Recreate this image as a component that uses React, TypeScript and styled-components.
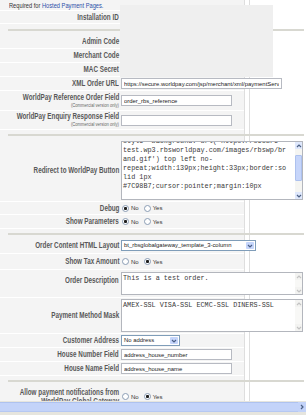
import React from 'react';
import styled, { createGlobalStyle } from 'styled-components';

const SANS = `"Liberation Sans", Arial, "Noto Sans", sans-serif`;
const MONO = `"Liberation Mono", "DejaVu Sans Mono", monospace`;

const GlobalStyle = createGlobalStyle`
  html, body {
    margin: 0;
    padding: 0;
    width: 306px;
    height: 415px;
    overflow: hidden;
    background: #fff;
  }
  body {
    font-family: ${SANS};
  }
`;

const Page = styled.div`
  position: relative;
  width: 306px;
  height: 415px;
  overflow: hidden;
  background: linear-gradient(
    to right,
    #f4f4f4 0 244px,
    #dedede 244px 245px,
    #fff 245px 249px,
    #dedede 249px 250px,
    #fff 250px
  );
`;

/* the page was captured squeezed sideways: text is narrowed with scaleX */
const Narrow = styled.span<{ $x?: number; $origin?: string }>`
  display: inline-block;
  white-space: nowrap;
  transform: scaleX(${(p) => p.$x ?? 0.77});
  transform-origin: ${(p) => p.$origin ?? 'right'} center;
`;

const Intro = styled.div`
  width: 244px;
  height: 11px;
  padding-left: 9px;
  box-sizing: border-box;
  border-bottom: 1px solid #fff;
  font-size: 7.5px;
  line-height: 11px;
  color: #333;
`;

const IntroLink = styled.a`
  color: #2d4fa8;
  text-decoration: none;
`;

const Row = styled.div<{ $h: number }>`
  display: grid;
  grid-template-columns: 120px 124px;
  width: 244px;
  height: ${(p) => p.$h}px;
  border-bottom: 1px solid #fff;
  box-sizing: border-box;
`;

const Label = styled.div<{ $top?: number }>`
  display: flex;
  flex-direction: column;
  justify-content: ${(p) => (p.$top !== undefined ? 'flex-start' : 'center')};
  align-items: flex-end;
  padding-top: ${(p) => p.$top ?? 0}px;
  padding-right: 1px;
  text-align: right;
  font-size: 8.2px;
  font-weight: bold;
  line-height: 9px;
  color: #585858;
`;

const Note = styled.span`
  font-size: 5.5px;
  font-weight: normal;
  line-height: 7px;
  color: #666;
`;

const Value = styled.div`
  display: flex;
  align-items: center;
  min-width: 0;
  padding-left: 1px;
`;

const Divider = styled.div<{ $h: number }>`
  display: flex;
  align-items: center;
  height: ${(p) => p.$h}px;
  padding: 0 2px 0 8px;

  &::after {
    content: '';
    flex: 1;
    height: 2px;
    background: #d8d8d1;
  }
`;

const TextInput = styled.input<{ $w: number }>`
  flex-shrink: 0;
  box-sizing: border-box;
  width: ${(p) => p.$w}px;
  height: 11px;
  margin: 0;
  padding: 0 2px;
  border: 1px solid #b7bac2;
  background: #fff;
  font-family: ${SANS};
  font-size: 5.9px;
  line-height: 9px;
  color: #222;
  outline: none;
`;

const Options = styled.div`
  display: flex;
  align-items: center;
  padding-left: 1px;
`;

const RadioInput = styled.input`
  appearance: none;
  box-sizing: border-box;
  width: 7px;
  height: 7px;
  margin: 0 2px 0 0;
  border: 1px solid #8b9db4;
  border-radius: 50%;
  background: #fff;

  &:checked {
    background: radial-gradient(circle, #1e1e1e 0 1.3px, #fff 1.8px);
  }
`;

const OptionText = styled.span`
  margin-right: 5px;
  font-size: 6px;
  color: #333;
`;

const Combo = styled.div<{ $w: number }>`
  flex-shrink: 0;
  display: flex;
  align-items: center;
  box-sizing: border-box;
  width: ${(p) => p.$w}px;
  height: 11px;
  padding: 1px;
  border: 1px solid #7f9db9;
  background: #fff;
`;

const ComboText = styled.span`
  flex: 1;
  min-width: 0;
  overflow: hidden;
  padding-left: 1px;
  font-size: 5.9px;
  line-height: 9px;
  white-space: nowrap;
  color: #222;
`;

const DropButton = styled.span`
  display: flex;
  align-items: center;
  justify-content: center;
  width: 8px;
  height: 100%;
  background: #c5d5fb;
  border-radius: 1px;
`;

const AreaBox = styled.div<{ $h: number }>`
  flex-shrink: 0;
  position: relative;
  width: 182px;
  height: ${(p) => p.$h}px;
`;

/* a code box: monospace lines kept as typed */
const Area = styled.div<{ $padTop?: number }>`
  box-sizing: border-box;
  width: 100%;
  height: 100%;
  padding: ${(p) => p.$padTop ?? 0}px 9px 0 1px;
  border: 1px solid #b3b6bd;
  background: #fff;
  overflow: hidden;
  font-family: ${MONO};
  font-size: 6.8px;
  line-height: 9px;
  color: #3a3a3a;
  white-space: pre;
`;

const AreaLines = styled.div<{ $shift?: number }>`
  margin-top: ${(p) => -(p.$shift ?? 0)}px;
`;

const VScroll = styled.div<{ $active?: boolean }>`
  position: absolute;
  top: 1px;
  right: 1px;
  bottom: 1px;
  width: 7px;
  display: flex;
  flex-direction: column;
  background: ${(p) => (p.$active ? '#f5f5f2' : '#f8f8f6')};
`;

const ScrollButton = styled.span<{ $active?: boolean }>`
  display: flex;
  align-items: center;
  justify-content: center;
  height: 7px;
  background: ${(p) => (p.$active ? '#dfe8fc' : '#f3f3f1')};
`;

const ScrollThumb = styled.span`
  margin-top: 6px;
  height: 26px;
  box-sizing: border-box;
  background: #c6d5fa;
  border: 1px solid #adc1ee;
  border-radius: 1px;
`;

const ScrollSpacer = styled.span`
  flex: 1;
`;

const InfoBox = styled.div`
  position: absolute;
  left: 120px;
  top: 5px;
  width: 153px;
  height: 72px;
  background: #efefef;
`;

const PageScroll = styled.div`
  position: absolute;
  left: 0;
  right: 0;
  bottom: 0;
  z-index: 2;
  height: 14px;
  display: flex;
  align-items: flex-start;
  padding-top: 1px;
  box-sizing: border-box;
  background: #e6e5de;
`;

const PageThumb = styled.div`
  flex: 1;
  height: 10px;
  box-sizing: border-box;
  background: #c3d3f9;
  border-top: 1px solid #aec2ef;
  border-bottom: 1px solid #b6c8f2;
`;

const PageArrow = styled.div`
  display: flex;
  align-items: center;
  justify-content: center;
  width: 8px;
  height: 10px;
  background: #c3d3f9;
`;

const Chevron = ({ dir, color }: { dir: 'up' | 'down' | 'right'; color: string }) => {
  const d =
    dir === 'up' ? 'M1 4 L3 2 L5 4' : dir === 'down' ? 'M1 2 L3 4 L5 2' : 'M2 1 L4 3 L2 5';
  return (
    <svg width="6" height="6" viewBox="0 0 6 6">
      <path d={d} fill="none" stroke={color} strokeWidth="1.2" />
    </svg>
  );
};

interface FieldProps {
  label: React.ReactNode;
  note?: string;
  h: number;
  labelTop?: number;
  children?: React.ReactNode;
}

const Field: React.FC<FieldProps> = ({ label, note, h, labelTop, children }) => (
  <Row $h={h}>
    <Label $top={labelTop}>
      <Narrow>{label}</Narrow>
      {note && (
        <Note>
          <Narrow $x={0.75}>{note}</Narrow>
        </Note>
      )}
    </Label>
    <Value>{children}</Value>
  </Row>
);

const YesNo: React.FC<{ name: string; yes?: boolean }> = ({ name, yes }) => (
  <Options>
    <RadioInput type="radio" name={name} defaultChecked={!yes} />
    <OptionText>No</OptionText>
    <RadioInput type="radio" name={name} defaultChecked={yes} />
    <OptionText>Yes</OptionText>
  </Options>
);

const Dropdown: React.FC<{ w: number; value: string }> = ({ w, value }) => (
  <Combo $w={w} role="combobox" aria-expanded="false">
    <ComboText>{value}</ComboText>
    <DropButton>
      <Chevron dir="down" color="#4b5f86" />
    </DropButton>
  </Combo>
);

const ScrollBar: React.FC<{ active?: boolean }> = ({ active }) => {
  const arrow = active ? '#4d6185' : '#c3c3c3';
  return (
    <VScroll $active={active}>
      <ScrollButton $active={active}>
        <Chevron dir="up" color={arrow} />
      </ScrollButton>
      {active && <ScrollThumb />}
      <ScrollSpacer />
      <ScrollButton $active={active}>
        <Chevron dir="down" color={arrow} />
      </ScrollButton>
    </VScroll>
  );
};

const CodeBox: React.FC<{ h: number; text: string; padTop?: number; shift?: number; active?: boolean }> = ({
  h,
  text,
  padTop,
  shift,
  active,
}) => (
  <AreaBox $h={h}>
    <Area $padTop={padTop} role="textbox" aria-multiline="true">
      <AreaLines $shift={shift}>{text}</AreaLines>
    </Area>
    <ScrollBar active={active} />
  </AreaBox>
);

const redirectStyle = [
  `style="background: url('https://secure-`,
  'test.wp3.rbsworldpay.com/images/rbswp/br',
  "and.gif') top left no-",
  'repeat;width:139px;height:33px;border:so',
  'lid 1px',
  '#7C98B7;cursor:pointer;margin:10px',
].join('\n');

const App: React.FC = () => {
  return (
    <Page>
      <GlobalStyle />
      <Intro>
        <Narrow $x={0.76} $origin="left">
          Required for <IntroLink href="#">Hosted Payment Pages.</IntroLink>
        </Narrow>
      </Intro>
      <Field label="Installation ID" h={13} />
      <Divider $h={11} />
      <Field label="Admin Code" h={14} />
      <Field label="Merchant Code" h={14} />
      <Field label="MAC Secret" h={14} />
      <Field label="XML Order URL" h={14}>
        <TextInput
          $w={161}
          defaultValue="https://secure.worldpay.com/jsp/merchant/xml/paymentService.jsp"
        />
      </Field>
      <Field label="WorldPay Reference Order Field" note="(Commercial version only)" h={20}>
        <TextInput $w={111} defaultValue="order_rbs_reference" />
      </Field>
      <Field label="WorldPay Enquiry Response Field" note="(Commercial version only)" h={19}>
        <TextInput $w={111} defaultValue="" />
      </Field>
      <Divider $h={10} />
      <Field label="Redirect to WorldPay Button" h={62}>
        <CodeBox h={59} text={redirectStyle} shift={5} active />
      </Field>
      <Field label="Debug" h={13}>
        <YesNo name="debug" />
      </Field>
      <Field label="Show Parameters" h={14}>
        <YesNo name="params" />
      </Field>
      <Divider $h={9} />
      <Field label="Order Content HTML Layout" h={16}>
        <Dropdown w={135} value="bt_rbsglobalgateway_template_3-column" />
      </Field>
      <Field label="Show Tax Amount" h={16}>
        <YesNo name="tax" yes />
      </Field>
      <Field label="Order Description" h={28} labelTop={6}>
        <CodeBox h={23} padTop={1} text="This is a test order." />
      </Field>
      <Field label="Payment Method Mask" h={36}>
        <CodeBox h={33} padTop={1} text="AMEX-SSL VISA-SSL ECMC-SSL DINERS-SSL" />
      </Field>
      <Field label="Customer Address" h={14}>
        <Dropdown w={59} value="No address" />
      </Field>
      <Field label="House Number Field" h={14}>
        <TextInput $w={111} defaultValue="address_house_number" />
      </Field>
      <Field label="House Name Field" h={14}>
        <TextInput $w={111} defaultValue="address_house_name" />
      </Field>
      <Divider $h={10} />
      <Field
        label={
          <>
            Allow payment notifications from
            <br />
            WorldPay Global Gateway
          </>
        }
        h={22}
      >
        <YesNo name="notify" yes />
      </Field>

      <InfoBox />
      <PageScroll>
        <PageThumb />
        <PageArrow>
          <Chevron dir="right" color="#4d6185" />
        </PageArrow>
      </PageScroll>
    </Page>
  );
};

export default App;
